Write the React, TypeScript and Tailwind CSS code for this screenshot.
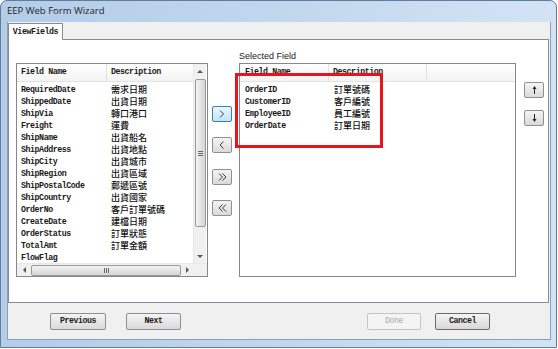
import React from "react";

const leftRows: [string, string][] = [
  ["RequiredDate", "需求日期"],
  ["ShippedDate", "出貨日期"],
  ["ShipVia", "轉口港口"],
  ["Freight", "運費"],
  ["ShipName", "出貨船名"],
  ["ShipAddress", "出貨地點"],
  ["ShipCity", "出貨城市"],
  ["ShipRegion", "出貨區域"],
  ["ShipPostalCode", "郵遞區號"],
  ["ShipCountry", "出貨國家"],
  ["OrderNo", "客戶訂單號碼"],
  ["CreateDate", "建檔日期"],
  ["OrderStatus", "訂單狀態"],
  ["TotalAmt", "訂單金額"],
  ["FlowFlag", ""],
];

const rightRows: [string, string][] = [
  ["OrderID", "訂單號碼"],
  ["CustomerID", "客戶編號"],
  ["EmployeeID", "員工編號"],
  ["OrderDate", "訂單日期"],
];

const mono =
  "font-['Liberation_Mono','Noto_Sans_CJK_TC',monospace] font-bold text-[8.3px] tracking-[-0.45px] text-[#1a1a1a]";
const cjk = "font-['Noto_Sans_CJK_TC',sans-serif] text-[9px] text-[#111] font-medium";

function Chev({ dir, double }: { dir: "l" | "r"; double?: boolean }) {
  const one = (dx: number) =>
    dir === "r" ? `${dx + 1},0.5 ${dx + 4.5},4 ${dx + 1},7.5` : `${dx + 4.5},0.5 ${dx + 1},4 ${dx + 4.5},7.5`;
  return (
    <svg width={double ? 9 : 6} height="8" viewBox={double ? "0 0 9 8" : "0 0 6 8"}>
      <polyline points={one(0)} fill="none" stroke="#3a3a3a" strokeWidth="1" />
      {double && <polyline points={one(3.5)} fill="none" stroke="#3a3a3a" strokeWidth="1" />}
    </svg>
  );
}

function VArrow({ up }: { up?: boolean }) {
  return (
    <svg width="5" height="8" viewBox="0 0 5 8">
      {up ? (
        <>
          <line x1="2.5" y1="1" x2="2.5" y2="8" stroke="#222" strokeWidth="1" />
          <polygon points="2.5,0 0.5,3 4.5,3" fill="#222" />
        </>
      ) : (
        <>
          <line x1="2.5" y1="0" x2="2.5" y2="7" stroke="#222" strokeWidth="1" />
          <polygon points="2.5,8 0.5,5 4.5,5" fill="#222" />
        </>
      )}
    </svg>
  );
}

function Tri({ dir }: { dir: "u" | "d" | "l" | "r" }) {
  const pts =
    dir === "u" ? "0,4 3,1 6,4" : dir === "d" ? "0,1 3,4 6,1" : dir === "l" ? "4,0 1,3 4,6" : "1,0 4,3 1,6";
  const w = dir === "u" || dir === "d" ? 6 : 5;
  const h = dir === "u" || dir === "d" ? 5 : 6;
  return (
    <svg width={w} height={h} viewBox={`0 0 ${w} ${h}`}>
      <polygon points={pts} fill="#555" />
    </svg>
  );
}

function SmallBtn({ children, active }: { children: React.ReactNode; active?: boolean }) {
  return (
    <div
      className={
        active
          ? "flex h-[16px] w-[20px] items-center justify-center rounded-[2px] border border-[#3c7fb1] bg-gradient-to-b from-[#eaf6fd] to-[#bee6fd]"
          : "flex h-[16px] w-[20px] items-center justify-center rounded-[2px] border border-[#8e8f8f] bg-gradient-to-b from-[#f4f4f4] to-[#dadada]"
      }
    >
      {children}
    </div>
  );
}

function BigBtn({ label, w, disabled, dark }: { label: string; w: string; disabled?: boolean; dark?: boolean }) {
  const base = "flex h-[17px] items-center justify-center rounded-[2px] border ";
  const look = disabled
    ? "border-[#c4c4c4] bg-[#f4f4f4] text-[#9a9a9a]"
    : dark
    ? "border-[#6b6b6b] bg-gradient-to-b from-[#f4f4f4] to-[#d8d8d8]"
    : "border-[#8e8f8f] bg-gradient-to-b from-[#f4f4f4] to-[#dadada]";
  return (
    <div className={base + look + " " + w}>
      <span
        className={
          disabled
            ? "font-['Liberation_Mono',monospace] text-[8.3px] tracking-[-0.45px] text-[#a8a8a8]"
            : mono
        }
      >
        {label}
      </span>
    </div>
  );
}

export default function App() {
  return (
    <div className="relative h-[349px] w-[558px] overflow-hidden bg-white">
      <div className="flex h-[348px] w-[557px] flex-col rounded-t-[7px] border border-[#627c9b] bg-gradient-to-r from-[#b3cce8] via-[#c1d7ee] to-[#d3e3f4]">
        {/* title bar */}
        <div className="flex h-[21px] items-center px-[6px]">
          <span className="font-['Open_Sans',sans-serif] text-[9.5px] text-[#1e1e1e]">EEP Web Form Wizard</span>
        </div>
        {/* client */}
        <div className="ml-[6px] flex h-[318px] w-[544px] flex-col border border-t-0 border-[#8aa0ba] bg-[#f0f0f0]">
          {/* tab strip */}
          <div className="flex h-[17px] items-end">
            <div className="relative -mb-[1px] flex h-[17px] w-[55px] items-center justify-center border border-b-0 border-[#898c95] bg-white">
              <span className={mono}>ViewFields</span>
            </div>
          </div>
          {/* tab page */}
          <div className="flex h-[264px] w-[541px] border border-[#898c95] bg-white pl-[7px] pt-[10px]">
            {/* left list */}
            <div className="mt-[13px] flex h-[214px] w-[192px] flex-col border border-[#828790]">
              <div className="flex h-[199px]">
                <div className="flex w-[176px] flex-col">
                  <div className="flex h-[18px] border-b border-[#e3e3e3] bg-gradient-to-b from-white to-[#f3f3f3]">
                    <div className="flex w-[90px] items-center border-r border-[#e0e0e0] pl-[4px]">
                      <span className={mono}>Field Name</span>
                    </div>
                    <div className="flex items-center pl-[4px]">
                      <span className={mono}>Description</span>
                    </div>
                  </div>
                  <div className="flex flex-col">
                    {leftRows.map(([f, d]) => (
                      <div key={f} className="flex h-[12px] items-center">
                        <div className="w-[90px] pl-[4px] leading-[12px]">
                          <span className={mono}>{f}</span>
                        </div>
                        <div className="pl-[4px] leading-[12px]">
                          <span className={cjk}>{d}</span>
                        </div>
                      </div>
                    ))}
                  </div>
                </div>
                {/* vertical scrollbar */}
                <div className="flex w-[13px] flex-col items-center border-l border-[#e8e8e8] bg-[#f0f0f0]">
                  <div className="flex h-[14px] w-full items-center justify-center">
                    <Tri dir="u" />
                  </div>
                  <div className="mt-[1px] flex h-[148px] w-[11px] items-center justify-center rounded-[2px] border border-[#9a9a9a] bg-gradient-to-r from-[#f2f2f2] to-[#d6d6d6]">
                    <div className="flex flex-col gap-[1px]">
                      <div className="h-[1px] w-[5px] bg-[#666]" />
                      <div className="h-[1px] w-[5px] bg-[#666]" />
                      <div className="h-[1px] w-[5px] bg-[#666]" />
                    </div>
                  </div>
                  <div className="flex-1" />
                  <div className="flex h-[14px] w-full items-center justify-center">
                    <Tri dir="d" />
                  </div>
                </div>
              </div>
              {/* horizontal scrollbar */}
              <div className="flex h-[13px] border-t border-[#e8e8e8] bg-[#f0f0f0]">
                <div className="flex w-[176px] items-center">
                  <div className="flex w-[14px] items-center justify-center">
                    <Tri dir="l" />
                  </div>
                  <div className="flex h-[11px] w-[150px] items-center justify-center rounded-[2px] border border-[#9a9a9a] bg-gradient-to-b from-[#f2f2f2] to-[#d6d6d6]">
                    <div className="flex gap-[1px]">
                      <div className="h-[5px] w-[1px] bg-[#666]" />
                      <div className="h-[5px] w-[1px] bg-[#666]" />
                      <div className="h-[5px] w-[1px] bg-[#666]" />
                    </div>
                  </div>
                  <div className="flex flex-1 items-center justify-center">
                    <Tri dir="r" />
                  </div>
                </div>
                <div className="w-[13px] bg-[#f0f0f0]" />
              </div>
            </div>

            {/* middle buttons */}
            <div className="ml-[4px] mt-[56px] flex flex-col">
              <SmallBtn active>
                <Chev dir="r" />
              </SmallBtn>
              <div className="mt-[15px]">
                <SmallBtn>
                  <Chev dir="l" />
                </SmallBtn>
              </div>
              <div className="mt-[16px]">
                <SmallBtn>
                  <Chev dir="r" double />
                </SmallBtn>
              </div>
              <div className="mt-[15px]">
                <SmallBtn>
                  <Chev dir="l" double />
                </SmallBtn>
              </div>
            </div>

            {/* right list */}
            <div className="ml-[7px] flex flex-col">
              <div className="flex h-[13px] items-center">
                <span className="font-['Liberation_Sans',sans-serif] text-[9px] text-[#222]">Selected Field</span>
              </div>
              <div className="flex h-[214px] w-[277px] flex-col border border-[#828790]">
                <div className="flex h-[18px] border-b border-[#e3e3e3] bg-gradient-to-b from-white to-[#f3f3f3]">
                  <div className="flex w-[89px] items-center border-r border-[#e0e0e0] pl-[5px]">
                    <span className={mono}>Field Name</span>
                  </div>
                  <div className="flex w-[98px] items-center border-r border-[#e0e0e0] pl-[4px]">
                    <span className={mono}>Description</span>
                  </div>
                </div>
                <div className="flex flex-col">
                  {rightRows.map(([f, d]) => (
                    <div key={f} className="flex h-[12px] items-center">
                      <div className="w-[89px] pl-[5px] leading-[12px]">
                        <span className={mono}>{f}</span>
                      </div>
                      <div className="pl-[5px] leading-[12px]">
                        <span className={cjk}>{d}</span>
                      </div>
                    </div>
                  ))}
                </div>
              </div>
            </div>

            {/* up/down */}
            <div className="ml-[8px] mt-[32px] flex flex-col">
              <SmallBtn>
                <VArrow up />
              </SmallBtn>
              <div className="mt-[12px]">
                <SmallBtn>
                  <VArrow />
                </SmallBtn>
              </div>
            </div>
          </div>

          {/* bottom bar */}
          <div className="flex flex-1 items-start pt-[10px]">
            <div className="ml-[42px]">
              <BigBtn label="Previous" w="w-[56px]" />
            </div>
            <div className="ml-[20px]">
              <BigBtn label="Next" w="w-[55px]" />
            </div>
            <div className="ml-[186px]">
              <BigBtn label="Done" w="w-[54px]" disabled />
            </div>
            <div className="ml-[14px]">
              <BigBtn label="Cancel" w="w-[55px]" dark />
            </div>
          </div>
        </div>
      </div>

      {/* red annotation rectangle */}
      <div className="absolute left-[235px] top-[73px] h-[75px] w-[148px] border-[3px] border-[#e8141c]" />
    </div>
  );
}
